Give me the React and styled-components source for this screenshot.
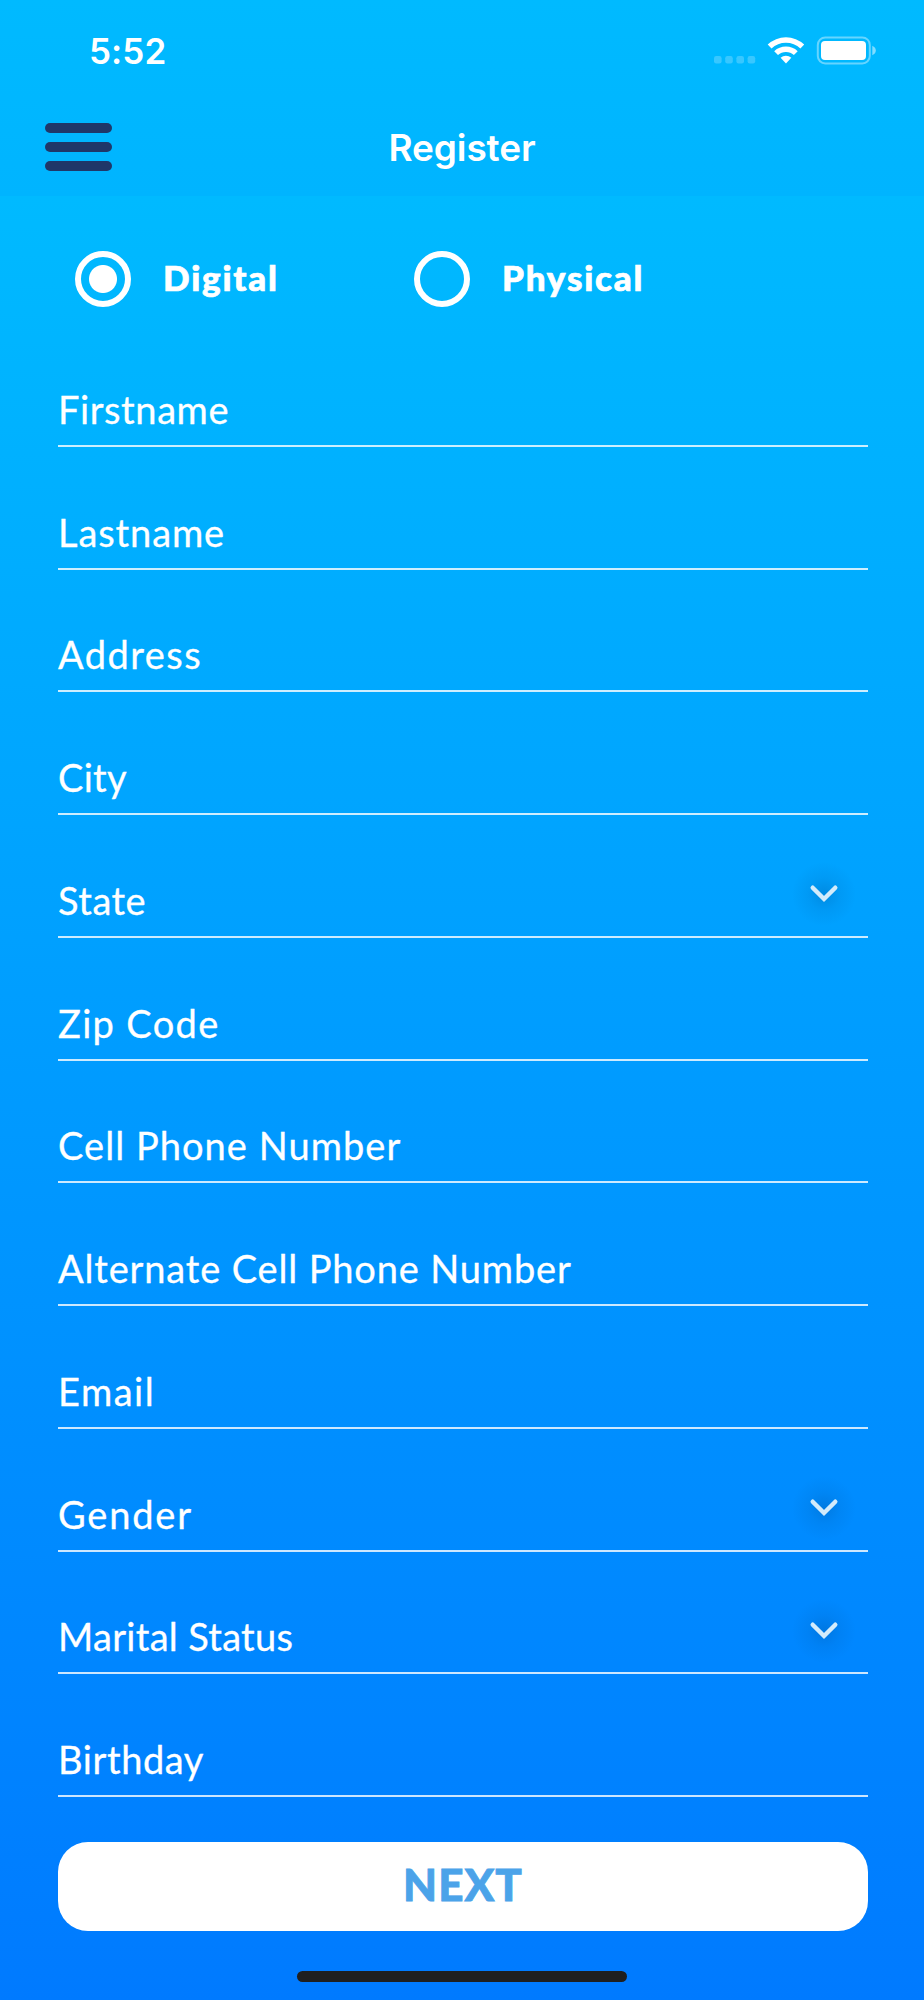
import { useState } from "react";
import styled, { createGlobalStyle } from "styled-components";

const GlobalStyle = createGlobalStyle`
	* {
		box-sizing:border-box;
	}
	body {
		margin:0;
		font-family:Lato, "Open Sans", sans-serif;
		color:white;
	}
`

const Screen = styled.div`
	width:924px;
	height:2000px;
	display:flex;
	flex-direction:column;
	overflow:hidden;
`

const Top = styled.header`
	height:196px;
	background:linear-gradient(#00baff, #00b4ff);
`

const StatusBar = styled.div`
	height:100px;
	padding:0 48px 0 89px;
	display:flex;
	align-items:center;
	justify-content:space-between;
`

const Time = styled.span`
	font-family:Inter, sans-serif;
	font-size:35px;
	font-weight:600;
	line-height:40px;
	letter-spacing:0.1px;
	margin-top:2px;
`

const StatusIcons = styled.svg`
	display:block;
	width:164px;
	height:30px;
`

const NavBar = styled.div`
	height:96px;
	padding:0 45px;
	display:grid;
	grid-template-columns:67px 1fr 67px;
	align-items:start;
`

const MenuButton = styled.button`
	width:67px;
	height:48px;
	margin-top:23px;
	padding:0;
	display:flex;
	flex-direction:column;
	justify-content:space-between;
	background:none;
	border:none;
	cursor:pointer;
`

const MenuBar = styled.span`
	height:10px;
	border-radius:5px;
	background:#1f3769;
`

const Title = styled.h1`
	margin:26px 0 0;
	font-family:Inter, sans-serif;
	font-size:37px;
	font-weight:600;
	line-height:44px;
	letter-spacing:-0.1px;
	text-align:center;
`

const Form = styled.form`
	flex:1;
	padding:55px 56px 0 58px;
	display:flex;
	flex-direction:column;
	background:linear-gradient(#00baff, #00a2ff 38%, #007aff);
`

const RadioGroup = styled.div`
	height:73px;
	padding-left:17px;
	display:flex;
	align-items:flex-start;
`

const RadioLabel = styled.label`
	width:339px;
	display:flex;
	align-items:flex-start;
	gap:32px;
	cursor:pointer;
`

const RadioInput = styled.input`
	appearance:none;
	width:56px;
	height:56px;
	margin:0;
	border:6px solid white;
	border-radius:50%;

	&:checked {
		background:radial-gradient(circle, white 13.5px, transparent 14.5px);
	}
`

const RadioText = styled.span`
	font-size:35px;
	font-weight:900;
	line-height:52px;
	letter-spacing:1.8px;
	-webkit-text-stroke:0.7px white;
`

const Field = styled.label`
	height:122.75px;
	flex:none;
	display:flex;
	align-items:flex-end;
	justify-content:space-between;
	padding-bottom:16px;
	border-bottom:2px solid rgba(255, 255, 255, 0.8);
`

const FieldName = styled.span`
	font-size:38px;
	line-height:40px;
	letter-spacing:${(props) => props.$spacing}px;
	white-space:nowrap;
	-webkit-text-stroke:0.3px white;
`

const Chevron = styled.svg`
	width:80px;
	height:80px;
	margin:0 4.5px -13.5px 0;
`

const NextButton = styled.button`
	flex:none;
	height:89px;
	margin-top:45px;
	padding:0 0 5px;
	border:none;
	border-radius:30px;
	background:white;
	color:#4ba3e9;
	font-family:inherit;
	font-size:44px;
	font-weight:900;
	line-height:60px;
	letter-spacing:1px;
	-webkit-text-stroke:0.8px #4ba3e9;
	cursor:pointer;
`

const HomeIndicator = styled.div`
	width:330px;
	height:11px;
	margin:40px 0 0 239px;
	border-radius:6px;
	background:#1f1f1f;
`

const fields = [
	{ name: "Firstname", spacing: 0.6 },
	{ name: "Lastname", spacing: 0.9 },
	{ name: "Address", spacing: 1.45 },
	{ name: "City", spacing: 0.3 },
	{ name: "State", spacing: 0.5, select: true },
	{ name: "Zip Code", spacing: 1.35 },
	{ name: "Cell Phone Number", spacing: 1.05 },
	{ name: "Alternate Cell Phone Number", spacing: 0.85 },
	{ name: "Email", spacing: 1.5 },
	{ name: "Gender", spacing: 1.8, select: true },
	{ name: "Marital Status", spacing: 0.3, select: true },
	{ name: "Birthday", spacing: 0.6 },
]

function ChevronIcon() {
	return (
		<Chevron viewBox="0 0 80 80">
			<defs>
				<radialGradient id="glow">
					<stop offset="0" stopColor="#004a90" stopOpacity="0.26" />
					<stop offset="0.5" stopColor="#004a90" stopOpacity="0.09" />
					<stop offset="1" stopColor="#004a90" stopOpacity="0" />
				</radialGradient>
			</defs>
			<circle cx="40" cy="41" r="32" fill="url(#glow)" />
			<path d="M28.7 34.7L40 46L51.3 34.7" fill="none" stroke="#d3ebfb" strokeWidth="4.4" strokeLinecap="round" />
		</Chevron>
	)
}

export default function App() {
	const [kind, setKind] = useState("Digital")

	return (
		<Screen>
			<GlobalStyle />
			<Top>
				<StatusBar>
					<Time>5:52</Time>
					<StatusIcons viewBox="712 35 164 30" fill="white">
						{[714, 725.2, 736.4, 747.6].map((x) => (
							<rect key={x} x={x} y="56" width="7.6" height="7.4" rx="2.2" opacity="0.22" />
						))}
						<path d="M767.7 44.6A26.5 26.5 0 0 1 804.2 44.6L800.4 48.4A21 21 0 0 0 771.5 48.4Z" />
						<path d="M774.2 51.2A17.2 17.2 0 0 1 797.7 51.2L793.9 55.1A11.6 11.6 0 0 0 778 55.1Z" />
						<path d="M780.6 57.8A8 8 0 0 1 791.3 57.8L786 63.4Z" />
						<rect x="817.8" y="37.4" width="52" height="26" rx="7.5" fill="none" stroke="white" strokeWidth="2" opacity="0.4" />
						<rect x="821" y="41" width="45" height="19" rx="4" />
						<path d="M872.3 45.8Q875.8 47.5 875.8 50.5T872.3 55.2Z" opacity="0.5" />
					</StatusIcons>
				</StatusBar>
				<NavBar>
					<MenuButton aria-label="Menu">
						<MenuBar />
						<MenuBar />
						<MenuBar />
					</MenuButton>
					<Title>Register</Title>
				</NavBar>
			</Top>
			<Form>
				<RadioGroup>
					{["Digital", "Physical"].map((item) => (
						<RadioLabel key={item}>
							<RadioInput type="radio" name="kind" checked={kind === item} onChange={() => setKind(item)} />
							<RadioText>{item}</RadioText>
						</RadioLabel>
					))}
				</RadioGroup>
				{fields.map((field) => (
					<Field key={field.name}>
						<FieldName $spacing={field.spacing}>{field.name}</FieldName>
						{field.select && <ChevronIcon />}
					</Field>
				))}
				<NextButton type="button">NEXT</NextButton>
				<HomeIndicator />
			</Form>
		</Screen>
	)
}
